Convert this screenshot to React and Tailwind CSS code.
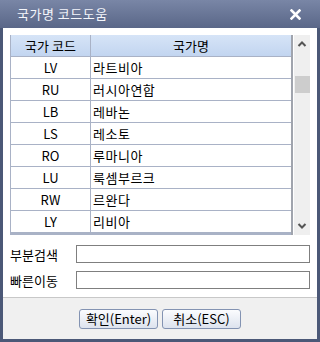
const rows = [
  ['LV', '라트비아'],
  ['RU', '러시아연합'],
  ['LB', '레바논'],
  ['LS', '레소토'],
  ['RO', '루마니아'],
  ['LU', '룩셈부르크'],
  ['RW', '르완다'],
  ['LY', '리비아'],
];

const font = { fontFamily: '"Noto Sans CJK KR", "Liberation Sans", sans-serif' };

const App = () => {
  return (
    <div
      className="w-[320px] h-[342px] bg-[#4b5877] flex flex-col px-[3px] pb-[3px] text-black"
      style={font}
    >
      {/* title bar */}
      <div className="-mx-[3px] h-[28px] shrink-0 flex items-center justify-between pl-[17px] pr-[19px] bg-gradient-to-b from-[#7986a6] to-[#5a6788]">
        <span className="text-[13px] text-[#f4f6fb] tracking-[0.5px]">국가명 코드도움</span>
        <svg width="11" height="11" viewBox="0 0 11 11">
          <path d="M1.5 1.5 L9.5 9.5 M9.5 1.5 L1.5 9.5" stroke="#fff" strokeWidth="2.6" strokeLinecap="square" />
        </svg>
      </div>

      {/* content */}
      <div className="flex-1 bg-white flex flex-col px-[7px] pt-[7px]">
        <div className="flex h-[200px]">
          <div className="w-[283px] flex flex-col border-l border-[#a9b2c6] border-r-2 border-r-[#a0a4ad]">
            <div className="flex h-[22px] bg-gradient-to-b from-[#d6e4f7] to-[#c2d5f0] border-b border-[#a9b2c6] text-[13px] leading-[22px]">
              <div className="w-[80px] text-center border-r border-[#a9b2c6]">국가 코드</div>
              <div className="flex-1 text-center">국가명</div>
            </div>
            {rows.map(([code, name]) => (
              <div key={code} className="flex h-[22px] border-b border-[#a9b2c6] text-[13px] leading-[21px]">
                <div className="w-[80px] text-center border-r border-[#a9b2c6]">{code}</div>
                <div className="flex-1 pl-[2px] tracking-[0.5px]">{name}</div>
              </div>
            ))}
            <div className="flex-1 bg-[#a9b2c6]" />
          </div>
          <div className="ml-[1px] w-[16px] bg-[#efefef] flex flex-col items-center">
            <svg width="10" height="8" viewBox="0 0 10 8" className="mt-[5px]">
              <path d="M1.5 6 L5 2.5 L8.5 6" stroke="#555" strokeWidth="2" fill="none" />
            </svg>
            <div className="mt-[28px] w-[15px] h-[17px] bg-[#cdcdcd]" />
            <div className="flex-1" />
            <svg width="10" height="8" viewBox="0 0 10 8" className="mb-[5px]">
              <path d="M1.5 2 L5 5.5 L8.5 2" stroke="#555" strokeWidth="2" fill="none" />
            </svg>
          </div>
        </div>

        <div className="mt-[10px] flex flex-col gap-[8px]">
          <div className="flex items-center">
            <span className="w-[66px] text-[13px] leading-[17px]">부분검색</span>
            <input className="flex-1 h-[18px] border border-[#7f7f7f] outline-none px-1 text-[12px]" />
          </div>
          <div className="flex items-center">
            <span className="w-[66px] text-[13px] leading-[17px]">빠른이동</span>
            <input className="flex-1 h-[18px] border border-[#7f7f7f] outline-none px-1 text-[12px]" />
          </div>
        </div>
      </div>

      {/* footer */}
      <div className="h-[42px] shrink-0 bg-[#f0f0f0] border-t border-[#c8c8c8] flex items-center justify-center gap-[4px]">
        <button className="w-[79px] h-[20px] rounded-[3px] border border-[#8393b2] bg-gradient-to-b from-[#fbfcfe] to-[#dde3ee] text-[13px] leading-[18px]">
          확인(Enter)
        </button>
        <button className="w-[79px] h-[20px] rounded-[3px] border border-[#8393b2] bg-gradient-to-b from-[#fbfcfe] to-[#dde3ee] text-[13px] leading-[18px]">
          취소(ESC)
        </button>
      </div>
    </div>
  );
};

export default App;
